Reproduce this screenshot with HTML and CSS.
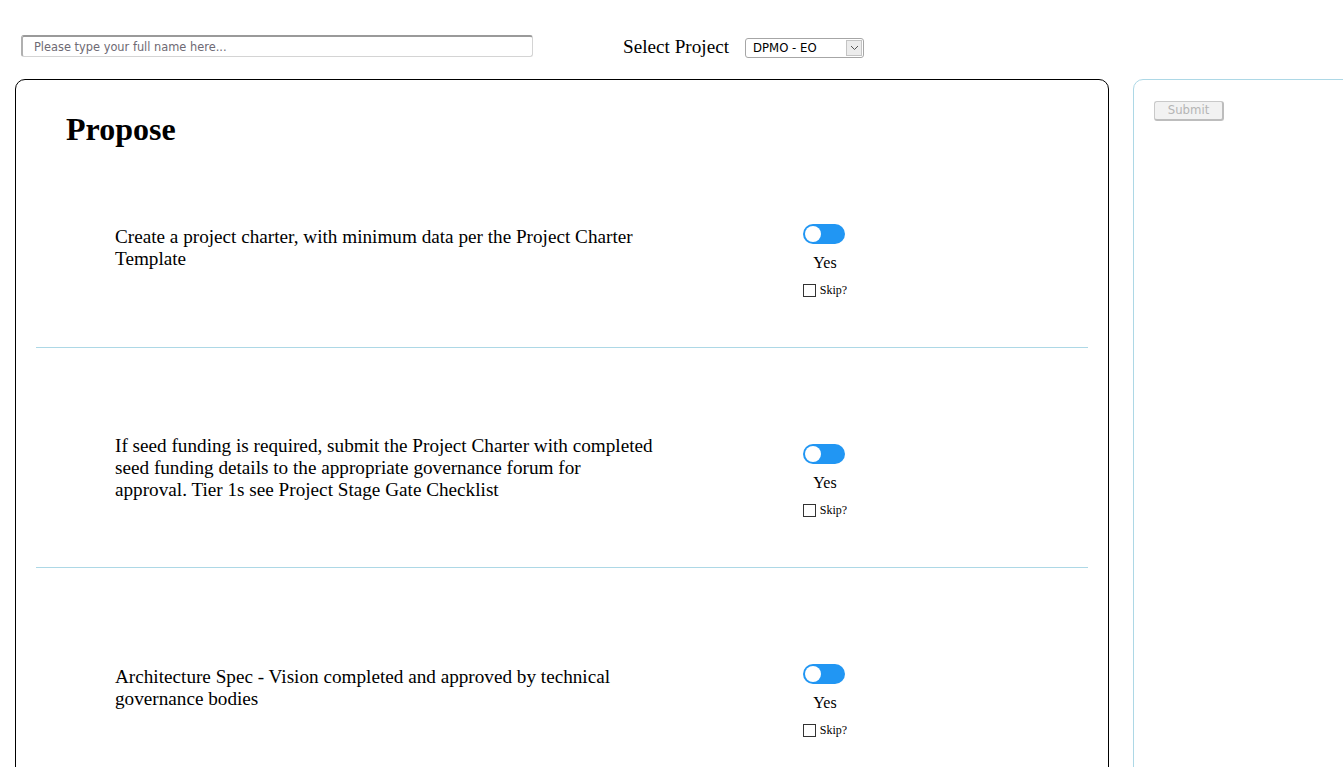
FILE: index.html
```html
<!DOCTYPE html>
<html>
<head>
<meta charset="utf-8">
<link rel="stylesheet" href="styles.css">
</head>
<body>
<div class="topbar">
  <input class="name-input" type="text" placeholder="Please type your full name here...">
  <label class="select-label">Select Project</label>
  <div class="select-wrap">
    <select class="project-select"><option>DPMO - EO</option></select>
    <span class="select-arrow"><svg width="9" height="6" viewBox="0 0 9 6"><path d="M1 1 L4.5 4.5 L8 1" fill="none" stroke="#555" stroke-width="1"/></svg></span>
  </div>
</div>
<div class="content">
  <div class="main-panel">
    <h1 class="stage-title">Propose</h1>
    <div class="row first">
      <div class="item-text">Create a project charter, with minimum data per the Project Charter Template</div>
      <div class="item-ctrl">
        <span class="switch"><span class="knob"></span></span>
        <span class="yes">Yes</span>
        <label class="skip"><input type="checkbox" class="skip-box">Skip?</label>
      </div>
    </div>
    <div class="row">
      <div class="item-text">If seed funding is required, submit the Project Charter with completed seed funding details to the appropriate governance forum for approval. Tier 1s see Project Stage Gate Checklist</div>
      <div class="item-ctrl">
        <span class="switch"><span class="knob"></span></span>
        <span class="yes">Yes</span>
        <label class="skip"><input type="checkbox" class="skip-box">Skip?</label>
      </div>
    </div>
    <div class="row">
      <div class="item-text">Architecture Spec - Vision completed and approved by technical governance bodies</div>
      <div class="item-ctrl">
        <span class="switch"><span class="knob"></span></span>
        <span class="yes">Yes</span>
        <label class="skip"><input type="checkbox" class="skip-box">Skip?</label>
      </div>
    </div>
  </div>
  <div class="side-panel">
    <button class="submit-btn" disabled>Submit</button>
  </div>
</div>
</body>
</html>
```
FILE: styles.css
```css
html, body {
  margin: 0;
  padding: 0;
  overflow: hidden;
  background: #fff;
}
body {
  font-family: "Liberation Serif", "Times New Roman", serif;
  color: #000;
}
.topbar {
  display: flex;
  align-items: flex-start;
  padding: 35px 0 0 21px;
  height: 44px;
}
.name-input {
  box-sizing: border-box;
  width: 512px;
  height: 22px;
  margin: 0;
  padding: 1px 0 0 11px;
  border: 1px solid #d4d4d4;
  border-top: 2px solid #9a9a9a;
  border-left: 2px solid #b0b0b0;
  border-radius: 3px;
  font-family: "DejaVu Sans", Verdana, sans-serif;
  font-size: 11.4px;
  color: #333;
  outline: none;
}
.name-input::placeholder {
  color: #6e6a74;
}
.select-label {
  margin: 1px 0 0 90px;
  font-size: 19.2px;
  line-height: 22px;
}
.select-wrap {
  position: relative;
  margin: 3px 0 0 16px;
  width: 119px;
  height: 20px;
}
.project-select {
  appearance: none;
  -webkit-appearance: none;
  box-sizing: border-box;
  width: 119px;
  height: 20px;
  margin: 0;
  padding: 0 0 0 7px;
  border: 1px solid #a6a6a6;
  border-radius: 3px;
  background: #fff;
  font-family: "DejaVu Sans", Verdana, sans-serif;
  font-size: 11.7px;
  color: #000;
}
.select-arrow {
  position: absolute;
  right: 2px;
  top: 2px;
  width: 16px;
  height: 16px;
  box-sizing: border-box;
  border: 1px solid #c4c4c4;
  background: #ececec;
  display: flex;
  align-items: center;
  justify-content: center;
  pointer-events: none;
}
.content {
  display: flex;
  align-items: flex-start;
  padding-left: 15px;
  gap: 24px;
}
.main-panel {
  flex: none;
  box-sizing: border-box;
  width: 1094px;
  height: 720px;
  border: 1px solid #000;
  border-radius: 10px;
  padding: 31px 20px 0 20px;
}
.stage-title {
  margin: 0 0 0 30px;
  font-size: 32px;
  font-weight: bold;
  line-height: 37px;
}
.row {
  display: flex;
  align-items: center;
  height: 199px;
  padding-top: 20px;
  border-bottom: 1px solid #add8e6;
}
.row.first {
  padding-top: 0;
}
.item-text {
  width: 542px;
  margin-left: 79px;
  font-size: 19.2px;
  line-height: 22px;
}
.item-ctrl {
  align-self: flex-start;
  margin-top: 76px;
  margin-left: 118px;
  width: 100px;
  display: flex;
  flex-direction: column;
  align-items: center;
}
.switch {
  display: block;
  position: relative;
  width: 42px;
  height: 20px;
  border-radius: 10px;
  background: #2196f3;
  margin-left: -2px;
}
.knob {
  position: absolute;
  left: 2px;
  top: 2px;
  width: 16px;
  height: 16px;
  border-radius: 50%;
  background: #fff;
}
.yes {
  margin-top: 10px;
  font-size: 16px;
  line-height: 18px;
}
.skip {
  display: flex;
  align-items: center;
  margin-top: 11px;
  font-size: 12px;
  line-height: 14px;
}
.skip-box {
  appearance: none;
  -webkit-appearance: none;
  box-sizing: border-box;
  width: 13px;
  height: 13px;
  margin: 0 4px 0 0;
  border: 1px solid #333;
  background: #fff;
}
.side-panel {
  flex: none;
  box-sizing: border-box;
  width: 240px;
  height: 720px;
  border: 1px solid #add8e6;
  border-radius: 10px;
  padding: 20px;
}
.submit-btn {
  box-sizing: border-box;
  width: 70px;
  height: 20px;
  margin: 0;
  padding: 0;
  border: 1px solid #c9c9c9;
  border-right: 2px solid #bdbdbd;
  border-bottom: 2px solid #bdbdbd;
  border-radius: 3px;
  background: #f2f2f2;
  font-family: "DejaVu Sans", Verdana, sans-serif;
  font-size: 11.7px;
  color: #b5b5b5;
}
```
